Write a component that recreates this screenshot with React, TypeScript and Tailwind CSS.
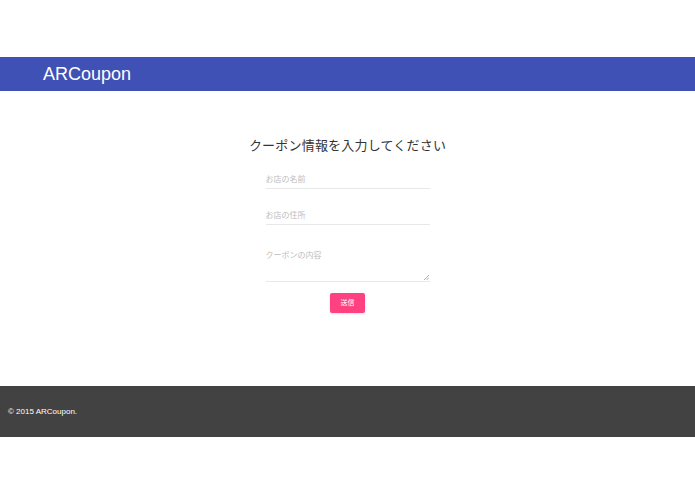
import React from 'react';

const font = "font-['Helvetica_Neue','Liberation_Sans','Noto_Sans_CJK_JP',sans-serif]";

const App: React.FC = () => {
    return (
        <div className={`w-[695px] h-[494px] bg-white flex flex-col ${font}`}>
            <div className="h-[57px]" />
            {/* Header */}
            <header className="h-[34px] bg-[#3f51b5] flex items-center pl-[43px]">
                <span className="text-white text-[18px] leading-none">ARCoupon</span>
            </header>

            {/* Form */}
            <main className="h-[295px] flex flex-col items-center">
                <h2 className="mt-[46px] text-[13px] leading-[18px] text-[#333] tracking-[0.2px]">クーポン情報を入力してください</h2>
                <form className="mt-[10px] w-[164px] flex flex-col">
                    <input
                        placeholder="お店の名前"
                        className="h-[24px] pt-[6px] text-[8px] border-b border-[#e8e8e8] outline-none placeholder:text-[#bdbdbd] bg-transparent"
                    />
                    <input
                        placeholder="お店の住所"
                        className="mt-[12px] h-[24px] pt-[6px] text-[8px] border-b border-[#e8e8e8] outline-none placeholder:text-[#bdbdbd] bg-transparent"
                    />
                    <div className="relative mt-[20px]">
                        <textarea
                            placeholder="クーポンの内容"
                            className="block w-full h-[37px] pt-[5px] text-[8px] border-b border-[#e8e8e8] outline-none placeholder:text-[#bdbdbd] bg-transparent resize-none"
                        />
                        {/* resize grip */}
                        <svg className="absolute right-[1px] bottom-[2px]" width="5" height="5" viewBox="0 0 5 5">
                            <path d="M5 0L0 5M5 2.5L2.5 5" stroke="#9e9e9e" strokeWidth="0.8" />
                        </svg>
                    </div>
                    <div className="flex justify-center mt-[11px]">
                        <button type="button" className="w-[35px] h-[20px] bg-[#ff4081] text-white text-[7px] rounded-[2px] shadow-sm">
                            送信
                        </button>
                    </div>
                </form>
            </main>

            {/* Footer */}
            <footer className="h-[51px] bg-[#424242] flex items-center pl-[8px]">
                <span className="text-white text-[8px]">© 2015 ARCoupon.</span>
            </footer>
        </div>
    );
};

export default App;
